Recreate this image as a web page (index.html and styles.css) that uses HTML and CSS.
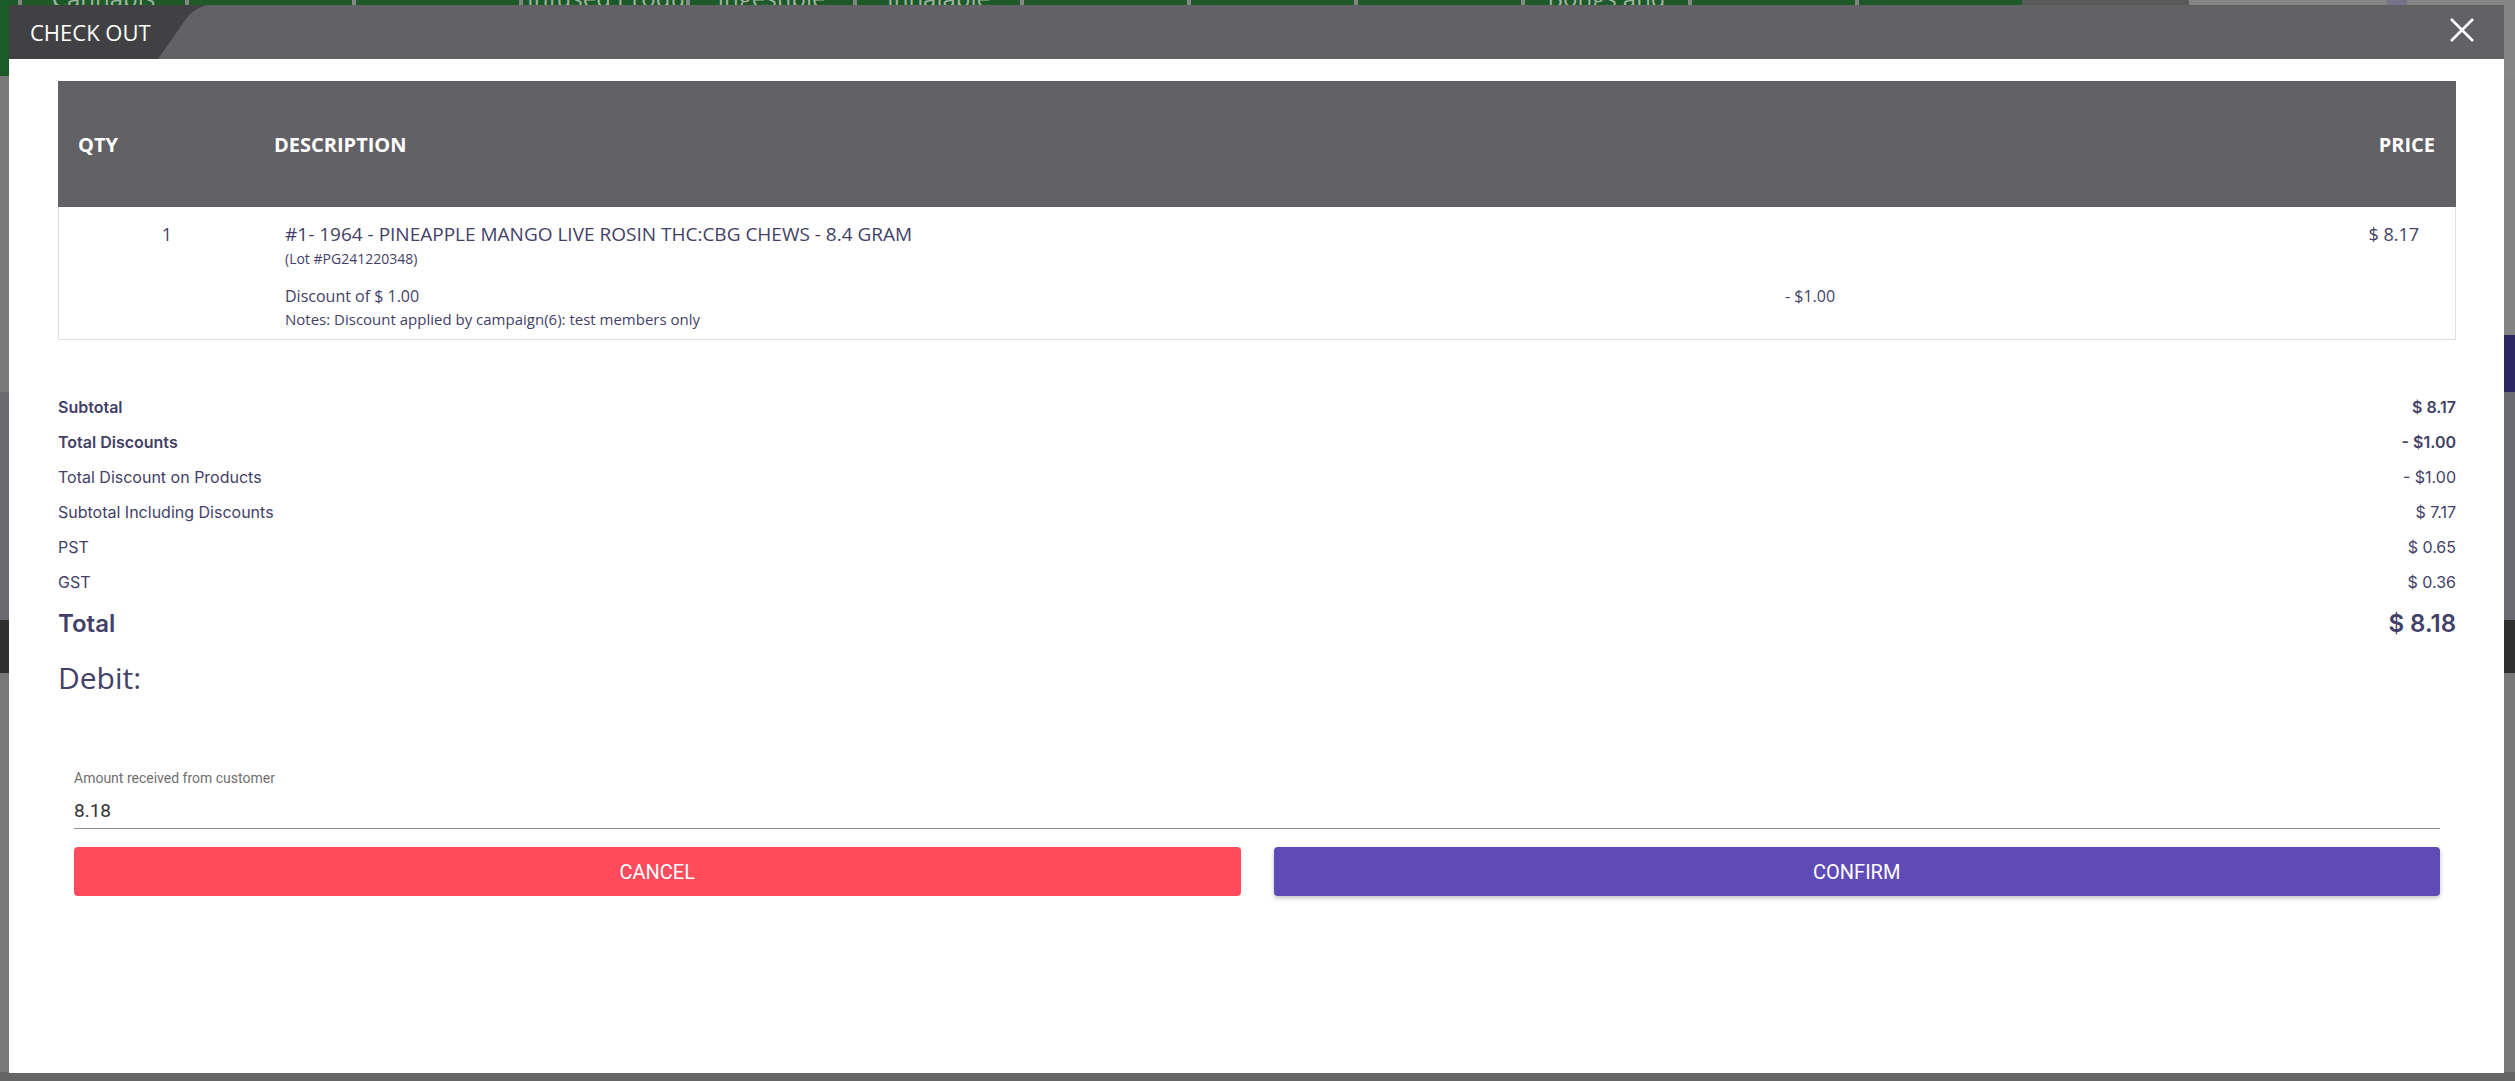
FILE: index.html
```html
<!DOCTYPE html>
<html lang="en">
  <head>
    <meta charset="UTF-8" />
    <meta name="viewport" content="width=device-width, initial-scale=1.0" />
    <title>Check Out</title>
    <link rel="stylesheet" href="styles.css">
  </head>
  <body>
    <!-- app behind the dialog -->
    <div class="app">
      <nav class="app-nav">
        <div class="app-tab"><span>Cannabis</span></div>
        <div class="app-tab"><span></span></div>
        <div class="app-tab"><span></span></div>
        <div class="app-tab"><span>Infused Products</span></div>
        <div class="app-tab"><span>Ingestible</span></div>
        <div class="app-tab"><span>Inhalable</span></div>
        <div class="app-tab"><span></span></div>
        <div class="app-tab"><span></span></div>
        <div class="app-tab"><span></span></div>
        <div class="app-tab"><span>Bongs and</span></div>
        <div class="app-tab"><span></span></div>
        <div class="app-tab"><span></span></div>
        <div class="app-tab dim"><span></span></div>
        <div class="app-nav-rest"><i class="nav-chip"></i></div>
      </nav>
      <div class="app-upper">
        <div class="app-products"></div>
        <aside class="app-cart"><div class="cart-pay"></div></aside>
      </div>
      <div class="app-band"></div>
      <div class="app-toolbar"></div>
      <div class="app-lower"></div>
      <div class="app-foot"></div>
    </div>

    <div class="modal">
      <header class="modal-head">
        <div class="modal-tab">CHECK OUT</div>
        <div class="modal-bar">
          <button class="modal-close" aria-label="Close">
            <svg width="26" height="24" viewBox="0 0 26 24">
              <path d="M2 1 L24 23 M24 1 L2 23" stroke="#fff" stroke-width="2.6" fill="none" />
            </svg>
          </button>
        </div>
      </header>

      <div class="modal-body">
        <div class="order-table">
          <div class="order-head">
            <span class="col-qty">QTY</span>
            <span class="col-desc">DESCRIPTION</span>
            <span class="col-price">PRICE</span>
          </div>
          <div class="order-row">
            <div class="cell-qty">1</div>
            <div class="cell-desc">
              <div class="item-name">#1- 1964 - PINEAPPLE MANGO LIVE ROSIN THC:CBG CHEWS - 8.4 GRAM</div>
              <div class="item-lot">(Lot #PG241220348)</div>
              <div class="item-discount">
                <span>Discount of $ 1.00</span>
                <span>- $1.00</span>
              </div>
              <div class="item-notes">Notes: Discount applied by campaign(6): test members only</div>
            </div>
            <div class="cell-price">$ 8.17</div>
          </div>
        </div>

        <div class="summary">
          <div class="sum-row strong"><span>Subtotal</span><span>$ 8.17</span></div>
          <div class="sum-row strong"><span>Total Discounts</span><span>- $1.00</span></div>
          <div class="sum-row"><span>Total Discount on Products</span><span>- $1.00</span></div>
          <div class="sum-row"><span>Subtotal Including Discounts</span><span>$ 7.17</span></div>
          <div class="sum-row"><span>PST</span><span>$ 0.65</span></div>
          <div class="sum-row"><span>GST</span><span>$ 0.36</span></div>
          <div class="sum-row total"><span>Total</span><span>$ 8.18</span></div>
        </div>

        <div class="pay-method">Debit:</div>

        <div class="pay-form">
          <label class="field">
            <span class="field-label">Amount received from customer</span>
            <input class="field-input" type="text" value="8.18" />
          </label>
          <div class="actions">
            <button class="btn btn-cancel">CANCEL</button>
            <button class="btn btn-confirm">CONFIRM</button>
          </div>
        </div>
      </div>
    </div>
  </body>
</html>
```

FILE: styles.css
```css
* {
  margin: 0;
  padding: 0;
  box-sizing: border-box;
}

html,
body {
  height: 100%;
}

body {
  background: #767676;
  overflow: hidden;
  font-family: "Open Sans", sans-serif;
}

/* background app (dimmed) */
.app {
  height: 100vh;
  display: flex;
  flex-direction: column;
}

.app-nav {
  height: 76px;
  display: flex;
  padding-left: 18px;
  background: #1c5a27;
  flex-shrink: 0;
}

.app-tab {
  width: 167px;
  flex-shrink: 0;
  border-left: 4px solid #858585;
  background: #1c5a27;
  color: #a3b2a3;
  font-size: 24px;
  line-height: 24px;
  text-align: center;
  padding: 0 4px;
  white-space: nowrap;
  overflow: hidden;
}

.app-tab span {
  display: block;
  margin-top: -14px;
}

.app-tab.dim {
  background: #5a5a5a;
  border-left-color: #5a5a5a;
}

.app-nav-rest {
  flex: 1;
  background: #858585;
  padding-left: 198px;
}

.nav-chip {
  display: block;
  width: 20px;
  height: 76px;
  background: #77738a;
}

.app-upper {
  height: 316px;
  display: grid;
  grid-template-columns: 1fr 12px;
  background: #7a7a7a;
}

.app-cart {
  display: flex;
  flex-direction: column;
  justify-content: flex-end;
  background: #838383;
}

.cart-pay {
  height: 57px;
  background: #2e2660;
}

.app-band {
  height: 228px;
  background: #6b6a71;
}

.app-toolbar {
  height: 53px;
  background: #2f2f2f;
}

.app-lower {
  flex: 1;
  background: #787878;
}

.app-foot {
  height: 9px;
  background: #656565;
}

/* dialog */
.modal {
  position: fixed;
  top: 5px;
  left: 9px;
  right: 11px;
  bottom: 8px;
  background: #fff;
  display: flex;
  flex-direction: column;
  overflow: hidden;
}

.modal-head {
  height: 54px;
  display: flex;
  background: #414143;
  flex-shrink: 0;
}

.modal-tab {
  width: 149px;
  flex-shrink: 0;
  padding-left: 21px;
  color: #fff;
  font-size: 22px;
  line-height: 54px;
  white-space: nowrap;
}

.modal-bar {
  flex: 1;
  position: relative;
  z-index: 0;
  display: flex;
  justify-content: flex-end;
  align-items: center;
  padding-right: 29px;
}

.modal-bar::before {
  content: "";
  position: absolute;
  left: 0;
  top: 0;
  width: 100%;
  height: 100%;
  background: #626166;
  transform: skewX(-35deg);
  transform-origin: bottom left;
  border-top-left-radius: 14px;
  z-index: -1;
}

.modal-close {
  background: none;
  border: 0;
  display: flex;
  margin-top: -5px;
  cursor: pointer;
}

.modal-body {
  padding: 22px 48px 0 49px;
  color: #433f68;
}

/* order table */
.order-head {
  display: grid;
  grid-template-columns: 216px 1fr 200px;
  height: 126px;
  align-items: center;
  background: #626166;
  color: #fff;
  font-weight: 700;
  font-size: 20px;
}

.order-head .col-qty {
  padding-left: 20px;
}

.order-head .col-price {
  text-align: right;
  padding-right: 21px;
}

.order-row {
  display: grid;
  grid-template-columns: 216px 1fr 200px;
  border: 1px solid #dedede;
  border-top: 0;
  padding: 15px 0 10px;
}

.cell-qty {
  text-align: center;
  font-size: 18px;
  line-height: 24px;
}

.cell-desc {
  padding-left: 10px;
}

.item-name {
  font-size: 19px;
  line-height: 24px;
}

.item-lot {
  font-size: 14px;
  line-height: 20px;
  margin-top: 3px;
}

.item-discount {
  display: grid;
  grid-template-columns: 1500px auto;
  font-size: 16px;
  line-height: 22px;
  margin-top: 16px;
}

.item-notes {
  font-size: 15px;
  line-height: 20px;
  margin-top: 2px;
}

.cell-price {
  text-align: right;
  padding-right: 36px;
  font-size: 18px;
  line-height: 24px;
}

/* totals */
.summary {
  margin-top: 50px;
  font-family: Inter, sans-serif;
  font-size: 16px;
}

.sum-row {
  display: flex;
  justify-content: space-between;
  line-height: 35px;
}

.sum-row.strong {
  font-weight: 600;
}

.sum-row.total {
  font-size: 24px;
  font-weight: 600;
  line-height: 40px;
  margin-top: 4px;
}

.pay-method {
  font-size: 30px;
  line-height: 40px;
  margin-top: 14px;
}

/* payment form */
.pay-form {
  margin-top: 72px;
  padding: 0 16px;
}

.field {
  display: block;
}

.field-label {
  display: block;
  font-family: Roboto, sans-serif;
  font-size: 14px;
  line-height: 16px;
  color: #6f6f6f;
}

.field-input {
  display: block;
  width: 100%;
  height: 31px;
  margin-top: 12px;
  border: 0;
  border-bottom: 1px solid #949494;
  padding: 0 0 6px;
  font-family: Roboto, sans-serif;
  font-size: 19px;
  line-height: 24px;
  color: #333;
  background: none;
  outline: none;
}

.actions {
  display: flex;
  gap: 33px;
  margin-top: 18px;
}

.btn {
  flex: 1;
  height: 49px;
  border: 0;
  border-radius: 4px;
  color: #fff;
  font-family: Roboto, sans-serif;
  font-size: 20px;
  cursor: pointer;
}

.btn-cancel {
  background: #ff4b5c;
}

.btn-confirm {
  background: #5f4bb6;
  box-shadow: 0 2px 4px rgba(0, 0, 0, 0.25);
}
```
